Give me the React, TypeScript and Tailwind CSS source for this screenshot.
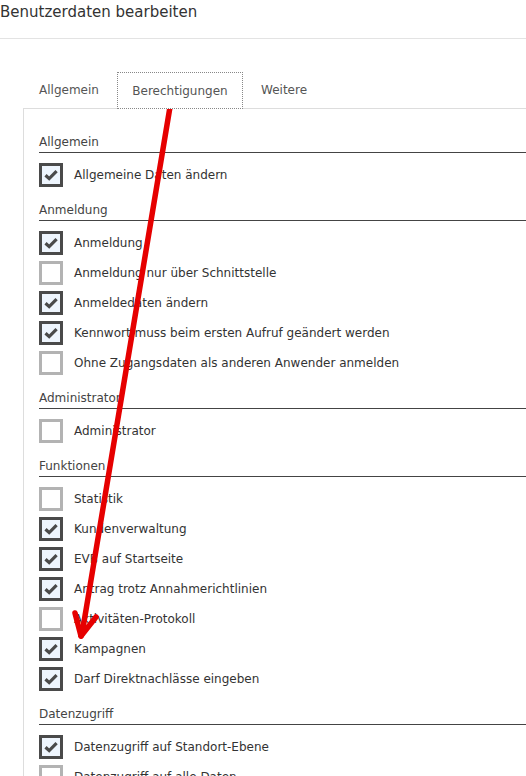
import React from "react";

type Item = { label: string; checked: boolean };
type Section = { title: string; items: Item[] };

const sections: Section[] = [
  { title: "Allgemein", items: [{ label: "Allgemeine Daten ändern", checked: true }] },
  {
    title: "Anmeldung",
    items: [
      { label: "Anmeldung", checked: true },
      { label: "Anmeldung nur über Schnittstelle", checked: false },
      { label: "Anmeldedaten ändern", checked: true },
      { label: "Kennwort muss beim ersten Aufruf geändert werden", checked: true },
      { label: "Ohne Zugangsdaten als anderen Anwender anmelden", checked: false },
    ],
  },
  { title: "Administrator", items: [{ label: "Administrator", checked: false }] },
  {
    title: "Funktionen",
    items: [
      { label: "Statistik", checked: false },
      { label: "Kundenverwaltung", checked: true },
      { label: "EVB auf Startseite", checked: true },
      { label: "Antrag trotz Annahmerichtlinien", checked: true },
      { label: "Aktivitäten-Protokoll", checked: false },
      { label: "Kampagnen", checked: true },
      { label: "Darf Direktnachlässe eingeben", checked: true },
    ],
  },
  {
    title: "Datenzugriff",
    items: [
      { label: "Datenzugriff auf Standort-Ebene", checked: true },
      { label: "Datenzugriff auf alle Daten", checked: false },
    ],
  },
];

function Box({ checked }: { checked: boolean }) {
  if (checked) {
    return (
      <div className="w-[24px] h-[24px] shrink-0 border-[3px] border-[#4a4a4a] bg-[#eef5fd] flex items-center justify-center">
        <svg width="14" height="12" viewBox="0 0 14 12">
          <path d="M1.5 6.2 L5.2 9.6 L12.6 2.2" fill="none" stroke="#4a4a4a" strokeWidth="3.2" strokeLinejoin="miter" />
        </svg>
      </div>
    );
  }
  return <div className="w-[24px] h-[24px] shrink-0 border-[3px] border-[#b3b3b3] bg-white" />;
}

export default function App() {
  return (
    <div
      className="relative w-[526px] h-[776px] overflow-hidden bg-white text-[#333]"
      style={{ fontFamily: '"DejaVu Sans", Verdana, sans-serif' }}
    >
      <div className="h-[39px] border-b border-[#e3e3e3]">
        <div className="pt-[3px] text-[15px] leading-[18px] text-[#333]">Benutzerdaten bearbeiten</div>
      </div>

      <div className="mt-[33px] ml-[23px]">
        <div className="flex items-end text-[12px] text-[#555]">
          <div className="w-[94px] h-[36px] pl-[16px] flex items-center">Allgemein</div>
          <div className="w-[126px] h-[37px] flex items-center justify-center border border-dotted border-[#888] bg-white -mb-px relative z-10">
            Berechtigungen
          </div>
          <div className="h-[36px] pl-[18px] flex items-center">Weitere</div>
        </div>
        <div className="border-l border-t border-[#dddddd] pl-[15px] pt-[23px]">
          {sections.map((s, i) => (
            <div key={s.title} className={i === 0 ? "" : "mt-[10px]"}>
              <div className="text-[12px] leading-[20px] text-[#444] border-b border-[#444]">{s.title}</div>
              <div className="mt-[7px]">
                {s.items.map((it) => (
                  <div key={it.label} className="h-[30px] flex items-center">
                    <Box checked={it.checked} />
                    <span className="ml-[11px] text-[12px] text-[#333] whitespace-nowrap">{it.label}</span>
                  </div>
                ))}
              </div>
            </div>
          ))}
        </div>
      </div>

      <svg className="absolute left-0 top-0 pointer-events-none" width="526" height="776" viewBox="0 0 526 776">
        <g stroke="#e60000" strokeWidth="5.5" strokeLinecap="round" strokeLinejoin="round" fill="none">
          <line x1="171" y1="101" x2="82" y2="634" />
          <line x1="81" y1="636" x2="75" y2="613" />
          <line x1="81" y1="636" x2="96" y2="617" />
        </g>
      </svg>
    </div>
  );
}
